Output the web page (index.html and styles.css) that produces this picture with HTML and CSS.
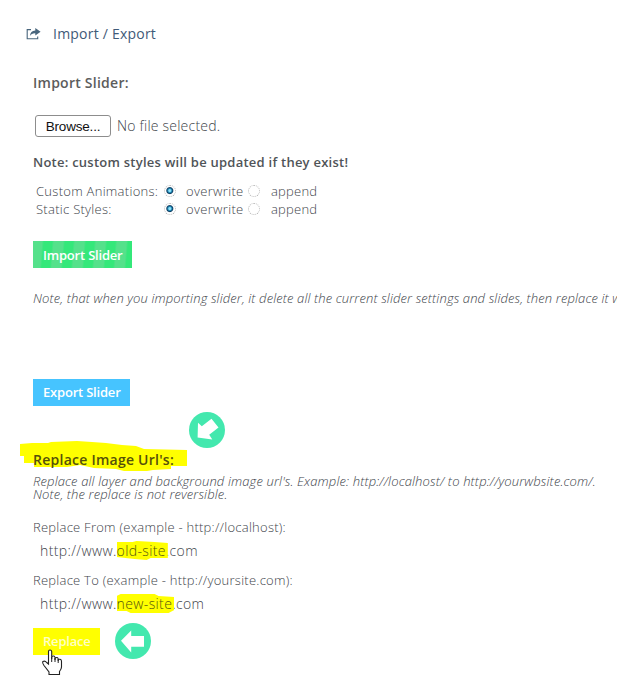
FILE: index.html
```html
<!DOCTYPE html>
<html lang="en">
<head>
<meta charset="utf-8">
<title>Import / Export</title>
<link rel="stylesheet" href="styles.css">
</head>
<body>
<main class="panel">
  <header class="title">
    <svg class="share" viewBox="0 0 15 12" width="15" height="12"><path d="M5 1.6H1.2V10.8H11.7V8.4" fill="none" stroke="#48657c" stroke-width="1.1"/><path d="M9.3 0L14.6 3.8 9.3 7.4V5.2C6.8 5.1 5.2 6 3.9 8.1C4.2 4.5 6 2.8 9.3 2.6Z" fill="#48657c"/></svg>
    <h1><span class="t-title">Import / Export</span></h1>
  </header>

  <section class="import">
    <h2><span>Import Slider:</span></h2>
    <div class="file"><button class="browse">Browse...</button><span class="t-file">No file selected.</span></div>
    <p class="warn"><span>Note: custom styles will be updated if they exist!</span></p>
    <div class="options">
      <span class="name">Custom Animations:</span><i class="radio on"></i><span class="over">overwrite</span><i class="radio"></i><span class="app">append</span>
      <span class="name">Static Styles:</span><i class="radio on"></i><span class="over">overwrite</span><i class="radio"></i><span class="app">append</span>
    </div>
    <button class="btn green"><span>Import Slider</span></button>
    <p class="hint"><span>Note, that when you importing slider, it delete all the current slider settings and slides, then replace it with the</span></p>
  </section>

  <section class="export">
    <button class="btn blue"><span>Export Slider</span></button>
    <svg class="badge down" viewBox="0 0 36 36" width="36" height="36"><circle cx="18" cy="18" r="18" fill="#43e8ae"/><path d="M9 10.7L12.8 14.2 22.5 6.8 29.5 15.6 20.2 22.8 23.3 27.4 8.6 25.4Z" fill="#fff"/></svg>
  </section>

  <section class="replace">
    <h2 class="marked">
      <svg class="marker" viewBox="0 0 168 31" width="168" height="31"><path d="M0 3L12 2 28 2 31 1 57 0 72 1 86 2 102 4 116 5 124 8 167 9V25H151V28L133 29 127 30H104L96 28 74 27 60 24 47 26H14V22H4V15H0Z" fill="#ff0"/></svg>
      <span>Replace Image Url's:</span>
    </h2>
    <p class="desc"><span class="t-desc1">Replace all layer and background image url's. Example: http://localhost/ to http://yourwbsite.com/.</span><br><span class="t-desc2">Note, the replace is not reversible.</span></p>
    <label><span>Replace From (example - http://localhost):</span></label>
    <div class="value"><span>http://www.<mark class="old">old-site</mark>.com</span></div>
    <label><span>Replace To (example - http://yoursite.com):</span></label>
    <div class="value"><span>http://www.<mark class="new">new-site</mark>.com</span></div>
    <div class="actions">
      <button class="btn yellow"><span>Replace</span></button>
      <svg class="badge" viewBox="0 0 36 36" width="36" height="36"><circle cx="18" cy="18" r="18" fill="#43e8ae"/><path d="M6 17.8L16.2 7.5V13H29V23.7H16.2V29.5Z" fill="#fff"/></svg>
      <svg class="cursor" viewBox="0 0 21 27" width="21" height="27"><path d="M6.5 15V2.5Q6.5 1 8 1T9.7 2.5V10 7.5Q12.5 6 13 8.5V11 9Q15.8 7.5 16.2 10V12 10.5Q19.5 9.5 19.5 12.5V18Q19.5 20 17.5 22.5V25.5H7V23L2 16.5Q0 13.5 1 12.5 3 11.5 4.7 13.5Z" fill="#fff" stroke="#222" stroke-width="1.1"/><path d="M9.7 8V13M13 9V13M16.2 10V14" stroke="#222"/></svg>
    </div>
  </section>
</main>
</body>
</html>
```
FILE: styles.css
```css
* { box-sizing: border-box; }
body {
  margin: 0;
  background: #fff;
  overflow: hidden;
  color: #40444a;
  font: 300 13px/18px "Open Sans", sans-serif;
}
h1, h2, p { margin: 0; }
span { white-space: nowrap; }
.panel { height: 691px; overflow: hidden; }
.title { display: flex; align-items: center; gap: 12px; padding: 24px 0 0 26px; height: 44px; }
h1 { font-size: 14px; line-height: 20px; font-weight: 400; color: #3f5a78; letter-spacing: .22px; }
h2 { font-size: 14px; line-height: 20px; font-weight: 600; color: #5c5c5c; letter-spacing: .25px; }
section { padding-left: 33px; }
.import { padding-top: 29px; }
.file { display: flex; align-items: center; gap: 6px; margin: 22px 0 0 2px; height: 22px; font-size: 14px; letter-spacing: .22px; }
.browse {
  width: 76px;
  height: 22px;
  padding: 0;
  border: 1px solid #8d8d8d;
  border-radius: 3px;
  background: #fff;
  color: #111;
  font: 13.5px/19px "Liberation Sans", sans-serif;
  letter-spacing: -.2px;
}
.warn { margin-top: 16px; font-weight: 600; color: #505458; letter-spacing: .245px; }
.options {
  display: grid;
  grid-template-columns: 128px 22px 62px 23px 60px;
  grid-auto-rows: 18px;
  align-items: center;
  margin: 11px 0 0 3px;
}
.name { letter-spacing: .28px; }
.over { letter-spacing: .32px; }
.app { letter-spacing: .22px; }
.radio { width: 12px; height: 12px; border: 1px dotted #b5b5b5; border-radius: 50%; }
.radio.on { background: radial-gradient(circle at 48% 46%, #8fe0f8 0 1px, #1c88b5 2px, #123f63 3px, #fff 4px); }
.btn {
  display: block;
  height: 27px;
  padding: 0 0 0 10px;
  border: 0;
  color: #fff;
  font: 600 13px/27px "Open Sans", sans-serif;
  letter-spacing: -.2px;
  text-align: left;
}
.green {
  width: 99px;
  margin-top: 23px;
  padding-top: 1px;
  background: repeating-linear-gradient(95deg, #55e18b 0 9px, #34e87a 11px 19px, #55e18b 21px);
}
.hint { margin-top: 21px; font-style: italic; letter-spacing: .125px; }
.export { padding-top: 72px; height: 143px; }
.blue { width: 97px; background: #46c4ff; }
.badge { display: block; flex: none; }
.down { margin: 6px 0 0 156px; }
.marked { position: relative; }
.marker { position: absolute; left: -13px; top: -9px; }
.marked span { position: relative; color: #55500a; }
.desc { margin-top: 5px; font-style: italic; line-height: 13px; letter-spacing: .142px; }
label { display: block; letter-spacing: .25px; }
.desc + label { margin-top: 17px; }
.value { margin: 5px 0 11px 7px; height: 19px; font-size: 14px; line-height: 19px; letter-spacing: .37px; }
mark { position: relative; z-index: 0; background: none; color: #55550f; }
mark::before {
  content: "";
  position: absolute;
  z-index: -1;
  inset: 0 -2px 0 0;
  background: #ff0;
}
.old::before { clip-path: polygon(0 1px, 16px 1px, 20px 0, 38px 1px, 100% 2px, 100% 17px, 34px 17px, 30px 19px, 18px 18px, 0 16px); }
.new::before { clip-path: polygon(0 2px, 4px 0, 38px 0, 42px 2px, 100% 3px, 100% 16px, 52px 19px, 14px 19px, 10px 17px, 0 17px); }
.actions { position: relative; display: flex; align-items: center; gap: 15px; height: 36px; margin-top: -1px; }
.yellow { width: 67px; background: #ff0; color: #ffffc4; }
.cursor { position: absolute; left: 9px; top: 26px; }
```
